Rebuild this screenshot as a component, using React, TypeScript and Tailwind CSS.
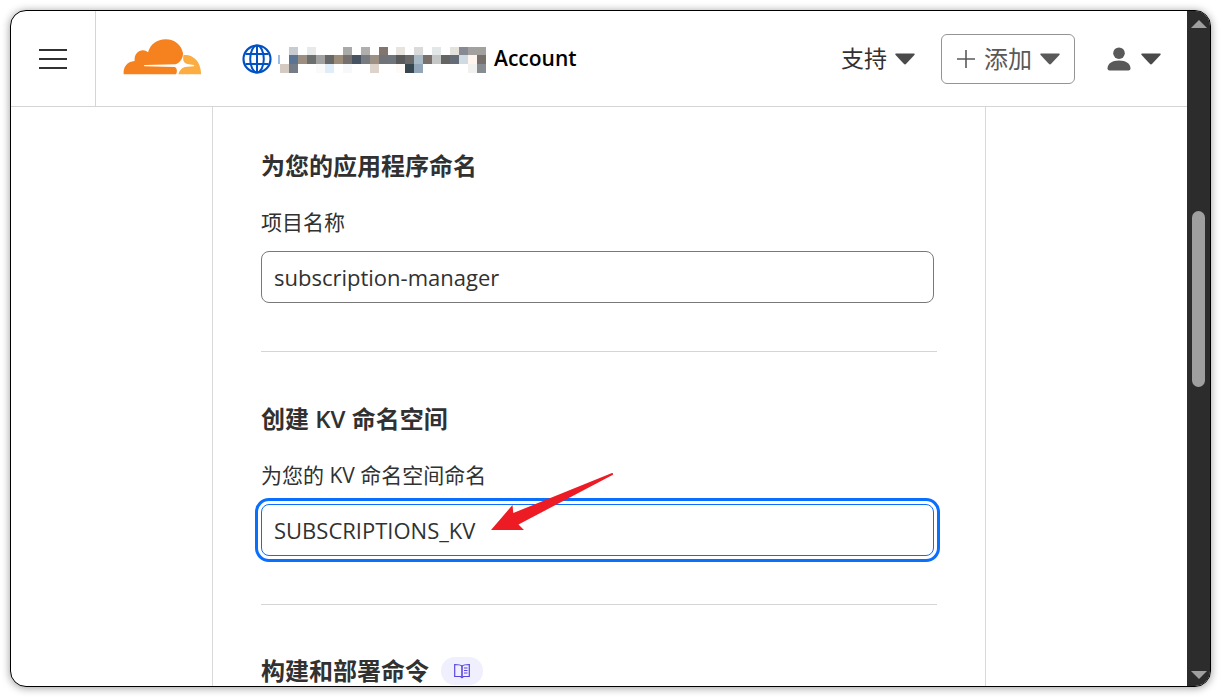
import type { ReactNode } from "react";

const MASK_ROWS: { y: number; h: number; cells: (string | null)[] }[] = [
  {
    y: 0,
    h: 8,
    cells: [null, "#c8cbd0", null, "#e8eaea", null, null, null, "#a8a9a8", null, "#b0afae", null, "#80766f", null, "#e7e3de", null, "#dadada", null, "#e3e7e7", null, "#e5e2dc", "#878a92", "#a2a19f", "#a2a19e"],
  },
  {
    y: 8,
    h: 9,
    cells: [null, "#5c7494", "#9c8e81", "#6b6f6e", "#a1a1a1", "#666766", "#9b8d79", "#75706e", "#475360", "#787c80", "#9c8f84", "#707478", "#6f757a", "#595959", "#6a6969", "#aabbc8", "#7a706b", "#c4c7c6", "#646563", "#656c78", "#cfdae2", "#fff5ee", "#766f6b"],
  },
  {
    y: 17,
    h: 9,
    cells: ["#d5cac1", "#747d87", null, null, "#fafafa", "#dfedfb", null, "#f7f8fa", null, null, "#ddd3ca", null, null, "#fdfaf7", "#37474f", "#93a5b9", null, null, null, null, null, "#f1f2f0", "#878c90"],
  },
];

function columnX(index: number) {
  return 2 + index * 9 - (index > 12 ? 1 : 0);
}

function MaskedName() {
  return (
    <svg width="208" height="28" viewBox="0 -2 208 28" shapeRendering="crispEdges" aria-hidden="true">
      <rect x="0" y="8" width="2" height="9" fill="#9dbde8" />
      {MASK_ROWS.map((row) =>
        row.cells.map((fill, i) =>
          fill ? (
            <rect key={`${row.y}-${i}`} x={columnX(i)} y={row.y} width={columnX(i + 1) - columnX(i)} height={row.h} fill={fill} />
          ) : null,
        ),
      )}
    </svg>
  );
}

function CloudLogo() {
  return (
    <svg width="78" height="36" viewBox="369 116 234 108" className="block" aria-hidden="true">
      <path
        fill="#f6821f"
        d="M371 222C369 200 381 184 404 182C402 163 414 150 429 150C435 150 440 152 444 156C451 132 471 117 497 117C525 117 544 135 549 158C550 172 541 187 527 192L434 194C431 195 431 197 434 198L524 200C531 202 533 214 528 222Z"
      />
      <path
        fill="#fbad41"
        d="M551 164C581 161 604 186 603 222H535C538 211 544 203 555 200L581 198C583 197 583 195 581 194L562 191C550 187 547 178 551 164Z"
      />
    </svg>
  );
}

function GlobeIcon() {
  return (
    <svg width="30" height="30" viewBox="0 0 30 30" fill="none" stroke="#0051c3" strokeWidth="2" aria-hidden="true">
      <circle cx="15" cy="15" r="13.5" strokeWidth="2.2" />
      <ellipse cx="15" cy="15" rx="6.8" ry="13.5" />
      <path d="M15 1.5v27M3.5 10h23M3.5 20h23" />
    </svg>
  );
}

function Caret({ color }: { color: string }) {
  return (
    <svg width="20" height="12" viewBox="0 0 20 12" aria-hidden="true">
      <path fill={color} d="M1 0.5H19Q20.2 0.8 19.4 1.9L11.2 10.8Q10 12 8.8 10.8L0.6 1.9Q-0.2 0.8 1 0.5Z" />
    </svg>
  );
}

function Header() {
  return (
    <header className="flex h-24 shrink-0 items-stretch border-b border-[#d5d5d8]">
      <div className="flex w-[85px] shrink-0 items-center justify-center border-r border-[#d5d5d8]">
        <button type="button" aria-label="菜单" className="cursor-pointer">
          <svg width="28" height="21" viewBox="0 0 28 21" stroke="#313131" strokeWidth="2" className="block" aria-hidden="true">
            <path d="M0 2h28M0 11h28M0 20h28" />
          </svg>
        </button>
      </div>
      <div className="flex min-w-0 flex-1 items-center justify-between pr-[26px] pl-[27px]">
        <div className="flex items-center">
          <a href="#" aria-label="Cloudflare" className="pb-1">
            <CloudLogo />
          </a>
          <a href="#" className="ml-[41px] flex items-center">
            <GlobeIcon />
            <span className="ml-1.5 flex items-center gap-2">
              <MaskedName />
              <span className="pb-0.5 text-[21px] leading-7 font-semibold text-black">Account</span>
            </span>
          </a>
        </div>
        <nav className="flex items-center">
          <button type="button" className="flex cursor-pointer items-center gap-2 text-[23px] text-[#313131]">
            支持
            <Caret color="#4a4a4a" />
          </button>
          <button
            type="button"
            className="ml-[26px] flex h-[50px] cursor-pointer items-center rounded-md border border-[#949494] px-3.5 text-2xl text-[#595959]"
          >
            <svg width="20" height="20" viewBox="0 0 20 20" stroke="#595959" strokeWidth="1.6" aria-hidden="true">
              <path d="M1 10h18M10 1v18" />
            </svg>
            <span className="mr-2 ml-2">添加</span>
            <Caret color="#595959" />
          </button>
          <button type="button" aria-label="用户" className="ml-8 flex cursor-pointer items-center gap-2.5">
            <svg width="24" height="24" viewBox="0 0 24 24" fill="#595959" aria-hidden="true">
              <circle cx="12" cy="6.2" r="5.8" />
              <path d="M0.5 21.5C0.5 16.5 5 13.5 12 13.5S23.5 16.5 23.5 21.5Q23.5 23.5 21.5 23.5H2.5Q0.5 23.5 0.5 21.5Z" />
            </svg>
            <Caret color="#4a4a4a" />
          </button>
        </nav>
      </div>
    </header>
  );
}

function Heading({ children }: { children: ReactNode }) {
  return <h2 className="text-2xl leading-[34px] font-semibold">{children}</h2>;
}

function Field({ id, label, value, active = false, children }: { id: string; label: string; value: string; active?: boolean; children?: ReactNode }) {
  return (
    <div className="relative mt-6 mr-[3px]">
      <label htmlFor={id} className="block text-[21px] leading-[30px]">
        {label}
      </label>
      <input
        id={id}
        type="text"
        defaultValue={value}
        className={
          active
            ? "mt-3.5 block h-[52px] w-full rounded-lg border border-[#086fff] bg-white px-3 text-[22px] outline-[3px] outline-offset-[3px] outline-[#086fff]"
            : "mt-3.5 block h-[52px] w-full rounded-lg border border-[#797979] bg-white px-3 text-[22px]"
        }
      />
      {children}
    </div>
  );
}

function PointerArrow() {
  return (
    <svg className="pointer-events-none absolute top-3 left-[230px]" width="123" height="60" viewBox="0 0 123 60" aria-hidden="true">
      <path fill="#ed1c24" d="M0 58L21.5 33L22.3 41L121 1Q123 1.5 121.5 3L27.5 52.5L33 58Z" />
    </svg>
  );
}

function DocsBadge() {
  return (
    <a href="#" aria-label="文档" className="flex h-7 w-[42px] items-center justify-center rounded-full bg-[#f0effd]">
      <svg width="16" height="16" viewBox="0 0 16 16" fill="none" stroke="#5746e0" aria-hidden="true">
        <path d="M8 3C6.5 1.8 4 1.5 0.7 1.5V13.5H6.5L8 14.7L9.5 13.5H15.3V1.5C12 1.5 9.5 1.8 8 3Z" strokeWidth="1.2" />
        <path d="M8 3V14" strokeWidth="1.6" />
        <path d="M10 5h3.5M10 7.5h3.5M10 10h3.5" strokeWidth="1.2" />
      </svg>
    </a>
  );
}

function Scrollbar() {
  return (
    <div className="flex w-[23px] shrink-0 flex-col items-center bg-[#2c2c2c] pt-[9px] pb-[7px]" aria-hidden="true">
      <svg width="16" height="8" viewBox="0 0 16 8">
        <path fill="#9f9f9f" d="M8 0L16 8H0Z" />
      </svg>
      <div className="flex min-h-0 w-[13px] flex-1 flex-col">
        <div className="basis-[28.5%]" />
        <div className="basis-[27.4%] rounded-full bg-[#9f9f9f]" />
      </div>
      <svg width="16" height="8" viewBox="0 0 16 8">
        <path fill="#9f9f9f" d="M8 8L0 0H16Z" />
      </svg>
    </div>
  );
}

export default function App() {
  return (
    <div
      lang="zh-CN"
      className="h-screen bg-white p-2.5 font-['Open_Sans','Noto_Sans_CJK_SC',sans-serif] text-[#313131]"
    >
      <div className="flex h-full overflow-hidden rounded-2xl border border-black bg-white shadow-[0_1px_8px_rgba(0,0,0,0.4)]">
        <div className="flex min-w-0 flex-1 flex-col">
          <Header />
          <main className="min-h-0 flex-1 overflow-hidden">
            <div className="mx-auto min-h-full max-w-[774px] border-x border-[#d9d9d9] px-12">
              <section className="border-b border-[#d5d5d8] pt-[42px] pb-12">
                <Heading>为您的应用程序命名</Heading>
                <Field id="project-name" label="项目名称" value="subscription-manager" />
              </section>
              <section className="border-b border-[#d5d5d8] pt-[50px] pb-12">
                <Heading>创建 KV 命名空间</Heading>
                <Field id="kv-name" label="为您的 KV 命名空间命名" value="SUBSCRIPTIONS_KV" active>
                  <PointerArrow />
                </Field>
              </section>
              <section className="flex items-center gap-3 pt-[49px]">
                <Heading>构建和部署命令</Heading>
                <DocsBadge />
              </section>
            </div>
          </main>
        </div>
        <Scrollbar />
      </div>
    </div>
  );
}
